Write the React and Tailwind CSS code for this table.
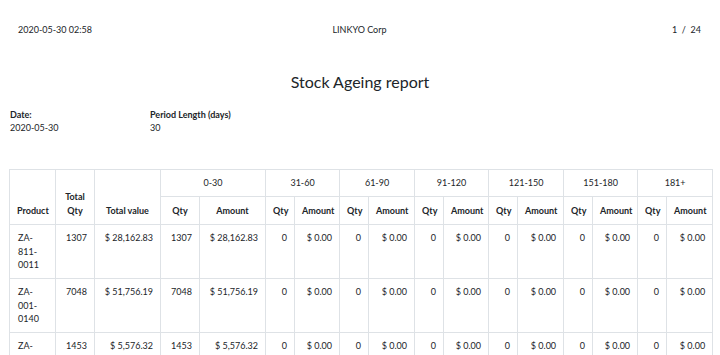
import React from 'react';

const buckets = ['0-30', '31-60', '61-90', '91-120', '121-150', '151-180', '181+'];

const rows = [
  { product: 'ZA-811-0011', qty: '1307', value: '$ 28,162.83' },
  { product: 'ZA-001-0140', qty: '7048', value: '$ 51,756.19' },
  { product: 'ZA-001-0141', qty: '1453', value: '$ 5,576.32' },
];

const widths = [46, 39, 66, 39, 66, 29, 45, 29, 46, 29, 45, 29, 46, 29, 45, 29, 46];

const th = 'border border-[#dee2e6] px-[7px] py-[6.5px] font-bold text-center align-bottom';
const td = 'border border-[#dee2e6] px-[7px] pt-[6.5px] pb-[6px] align-top';

export default function App() {
  return (
    <div className="w-[720px] h-[355px] overflow-hidden bg-white text-[#212529] text-[9px] leading-[13.5px] font-['Lato','Liberation_Sans',sans-serif]">
      <div className="flex justify-between items-center pt-[23px] pl-[18px] pr-[19px]">
        <span className="w-[120px]">2020-05-30 02:58</span>
        <span>LINKYO Corp</span>
        <span className="w-[120px] text-right">1 &nbsp;/&nbsp; 24</span>
      </div>

      <h1 className="text-center text-[16px] leading-[24px] mt-[33px]">Stock Ageing report</h1>

      <div className="flex mt-[14px] pl-[10px]">
        <div className="w-[140px]">
          <div className="font-bold">Date:</div>
          <div>2020-05-30</div>
        </div>
        <div>
          <div className="font-bold">Period Length (days)</div>
          <div>30</div>
        </div>
      </div>

      <div className="mt-[34px] pl-[9px]">
        <table className="table-fixed border-collapse w-[703px]">
          <colgroup>
            {widths.map((w, i) => (
              <col key={i} style={{ width: w }} />
            ))}
          </colgroup>
          <thead>
            <tr>
              <th rowSpan={2} className={th}>Product</th>
              <th rowSpan={2} className={th}>Total Qty</th>
              <th rowSpan={2} className={th}>Total value</th>
              {buckets.map((b) => (
                <th key={b} colSpan={2} className="border border-[#dee2e6] px-[7px] py-[6.5px] font-normal text-center">
                  {b}
                </th>
              ))}
            </tr>
            <tr>
              {buckets.map((b) => (
                <React.Fragment key={b}>
                  <th className={th}>Qty</th>
                  <th className={th}>Amount</th>
                </React.Fragment>
              ))}
            </tr>
          </thead>
          <tbody>
            {rows.map((r) => (
              <tr key={r.product}>
                <td className={td + ' pl-[8px]'}>{r.product}</td>
                <td className={td + ' text-right'}>{r.qty}</td>
                <td className={td + ' text-right'}>{r.value}</td>
                {buckets.map((b, i) => (
                  <React.Fragment key={b}>
                    <td className={td + ' text-right'}>{i === 0 ? r.qty : '0'}</td>
                    <td className={td + ' text-right'}>{i === 0 ? r.value : '$ 0.00'}</td>
                  </React.Fragment>
                ))}
              </tr>
            ))}
          </tbody>
        </table>
      </div>
    </div>
  );
}
